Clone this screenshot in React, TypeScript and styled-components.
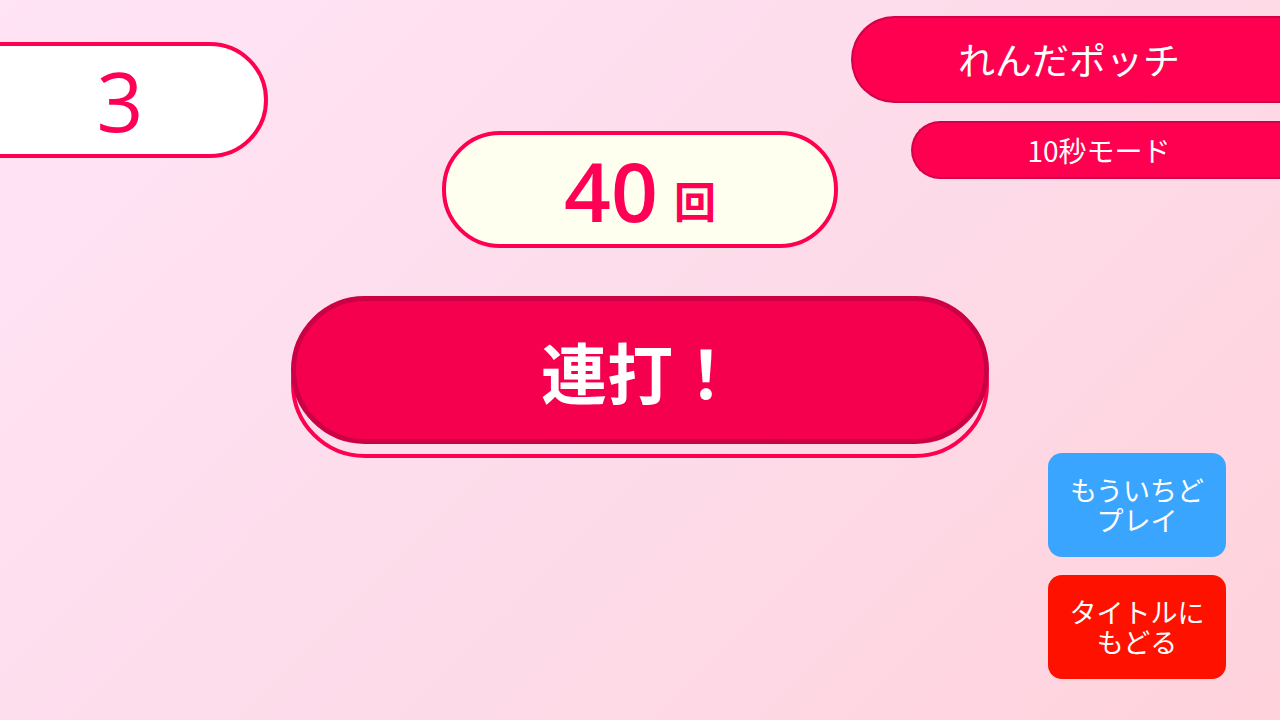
import React from 'react';
import styled, { createGlobalStyle } from 'styled-components';

const GlobalStyle = createGlobalStyle`
  html, body {
    margin: 0;
    padding: 0;
  }
  body {
    font-family: "Noto Sans CJK JP", sans-serif;
  }
`;

const Page = styled.div`
  width: 1280px;
  height: 720px;
  overflow: hidden;
  background: linear-gradient(135deg, #ffe4f6 0%, #fddbe9 55%, #ffd2dc 100%);
  display: flex;
  flex-direction: column;
`;

const TopRow = styled.div`
  display: grid;
  grid-template-columns: 1fr auto 1fr;
  align-items: start;
`;

const ScorePill = styled.div`
  box-sizing: border-box;
  width: 296px;
  height: 116px;
  margin-top: 42px;
  margin-left: -28px;
  background: #ffffff;
  border: 4px solid #ff0050;
  border-radius: 0 58px 58px 0;
  display: flex;
  align-items: center;
  justify-content: center;
  color: #ff0055;
  font-family: "Open Sans", "Noto Sans", sans-serif;
  font-size: 82px;
  line-height: 1;
`;

const CountPill = styled.div`
  box-sizing: border-box;
  width: 396px;
  height: 117px;
  margin-top: 131px;
  background: #fffff0;
  border: 4px solid #ff0050;
  border-radius: 58px;
  display: flex;
  align-items: center;
  justify-content: center;
  gap: 16px;
  color: #ff0055;
`;

const CountNumber = styled.span`
  font-family: "Open Sans", "Noto Sans", sans-serif;
  font-weight: 600;
  font-size: 82px;
  line-height: 1;
`;

const CountUnit = styled.span`
  font-family: "Noto Sans CJK JP", sans-serif;
  font-weight: 700;
  font-size: 42px;
  line-height: 1;
  margin-top: 20px;
`;

const HeaderStack = styled.div`
  justify-self: end;
  padding-top: 16px;
  display: flex;
  flex-direction: column;
  align-items: flex-end;
  gap: 18px;
`;

const TagPill = styled.div<{ $width: number; $height: number; $size: number }>`
  width: ${(p) => p.$width}px;
  height: ${(p) => p.$height}px;
  box-sizing: border-box;
  background: #ff0050;
  border: 2px solid #d4004a;
  border-right: none;
  border-radius: ${(p) => p.$height / 2}px 0 0 ${(p) => p.$height / 2}px;
  display: flex;
  align-items: center;
  justify-content: center;
  padding-left: 5px;
  color: #ffffff;
  font-family: "Noto Sans CJK JP", sans-serif;
  font-size: ${(p) => p.$size}px;
  line-height: 1;
`;

const TapWrap = styled.div`
  position: relative;
  align-self: center;
  width: 698px;
  height: 148px;
  margin-top: 48px;
  &::before {
    content: '';
    position: absolute;
    left: 0;
    right: 0;
    top: 14px;
    bottom: -14px;
    border: 4px solid #ff0050;
    border-radius: 80px;
  }
`;

const TapButton = styled.button`
  position: relative;
  width: 100%;
  height: 100%;
  box-sizing: border-box;
  background: #f5004f;
  border: 5px solid #cc0044;
  border-radius: 80px;
  color: #ffffff;
  font-family: "Noto Sans CJK JP", sans-serif;
  font-weight: 700;
  font-size: 66px;
  line-height: 1;
  cursor: pointer;
  padding: 0;
`;

const ActionColumn = styled.div`
  align-self: flex-end;
  margin-right: 54px;
  margin-top: 9px;
  display: flex;
  flex-direction: column;
  gap: 18px;
`;

const ActionButton = styled.button<{ $bg: string }>`
  width: 178px;
  height: 104px;
  border: none;
  border-radius: 14px;
  background: ${(p) => p.$bg};
  color: #ffffff;
  font-family: "Noto Sans CJK JP", sans-serif;
  font-size: 27px;
  padding: 0;
  cursor: pointer;
  display: flex;
  flex-direction: column;
  align-items: center;
  justify-content: center;
`;

const ActionLine = styled.span`
  display: block;
  height: 30px;
  line-height: 30px;
`;

export default function App() {
  return (
    <>
      <GlobalStyle />
      <Page>
        <TopRow>
          <ScorePill>3</ScorePill>
          <CountPill>
            <CountNumber>40</CountNumber>
            <CountUnit>回</CountUnit>
          </CountPill>
          <HeaderStack>
            <TagPill $width={429} $height={87} $size={37}>
              れんだポッチ
            </TagPill>
            <TagPill $width={369} $height={58} $size={28}>
              10秒モード
            </TagPill>
          </HeaderStack>
        </TopRow>
        <TapWrap>
          <TapButton>連打！</TapButton>
        </TapWrap>
        <ActionColumn>
          <ActionButton $bg="#3aa5ff">
            <ActionLine>もういちど</ActionLine>
            <ActionLine>プレイ</ActionLine>
          </ActionButton>
          <ActionButton $bg="#ff1100">
            <ActionLine>タイトルに</ActionLine>
            <ActionLine>もどる</ActionLine>
          </ActionButton>
        </ActionColumn>
      </Page>
    </>
  );
}
